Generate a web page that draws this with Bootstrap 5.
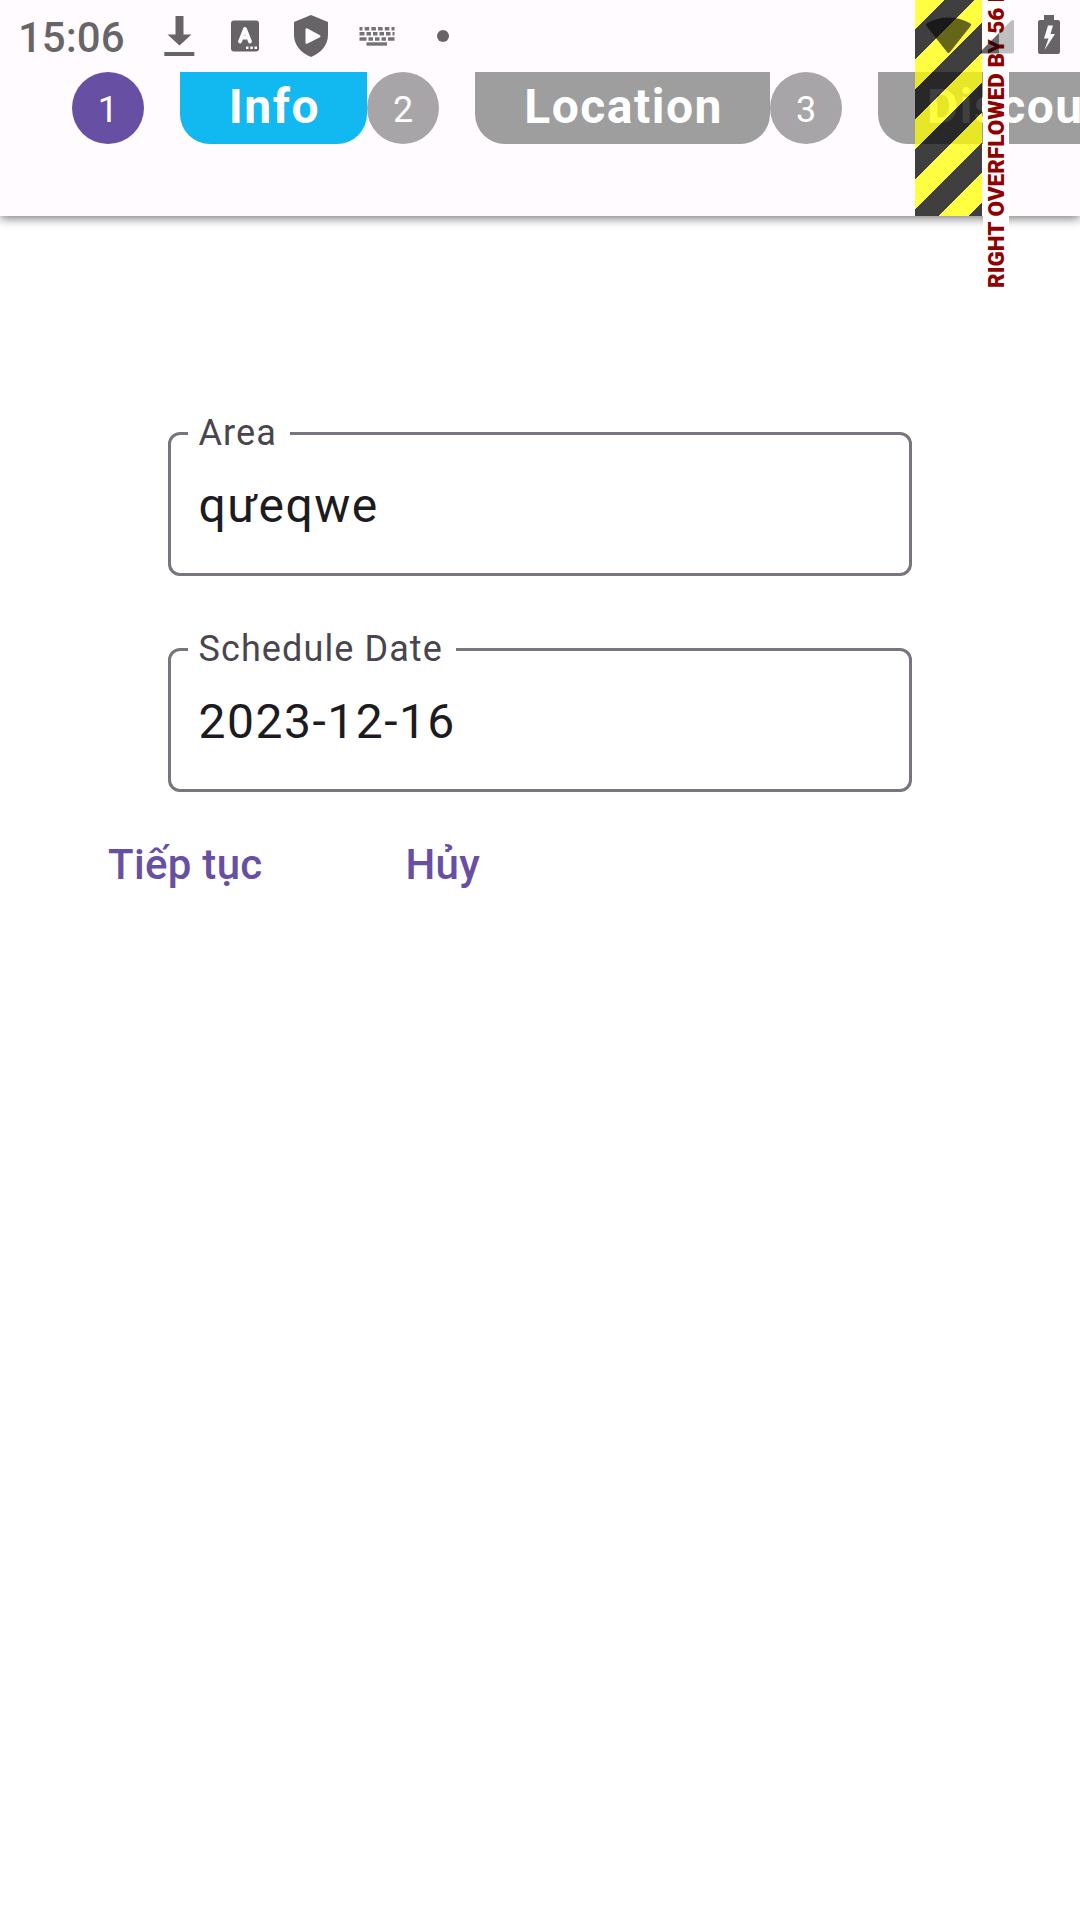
<!DOCTYPE html>
<html lang="vi">
<head>
<meta charset="utf-8">
<meta name="viewport" content="width=device-width, initial-scale=1">
<title>Schedule</title>
<link href="https://cdn.jsdelivr.net/npm/bootstrap@5.3.0/dist/css/bootstrap.min.css" rel="stylesheet">
<style>
  body { font-family: Roboto, "Noto Sans", sans-serif; background: #fff; color: #1c1b1f; }
  .screen { width: 1080px; height: 1920px; }
  .app-bar { height: 216px; background: #fffbff; box-shadow: 0 3px 9px rgba(0,0,0,.48); padding: 72px 0 0 72px; }
  .step-dot { width: 72px; height: 72px; background: #a8a5a9; color: #fff; font-size: 36px; line-height: 76px; letter-spacing: .4px; }
  .step-dot.current { background: #6750a4; }
  .step-tab { height: 72px; margin-left: 36px; padding: 0 47.4px 0 48.800px; background: #9e9e9e; color: #fff; border-radius: 0 0 30px 30px;
    font-size: 48px; font-weight: 700; line-height: 70px; letter-spacing: 1.5px; }
  .step-tab.current { background: #12b8f0; }
  .stripes { left: 915px; top: 0; width: 67px; height: 216px;
    background: repeating-linear-gradient(135deg, rgba(255,255,0,.75) 0 21.213px, rgba(0,0,0,.75) 21.213px 42.426px); }
  .overflow-note { left: 983px; bottom: -72px; width: 26px; height: 320px; background: #fff; color: #900000;
    font-size: 22.5px; font-weight: 900; line-height: 26px; writing-mode: vertical-rl; transform: rotate(180deg); }
  .status-bar { height: 72px; color: rgba(0,0,0,.6); }
  .clock { font-size: 42px; font-weight: 500; line-height: 72px; padding: 2px 0 0 18px; width: 160px; }
  .form-area { padding: 216px 168px 0; }
  .field + .field { margin-top: 72px; }
  .field .form-control { height: 144px; border: 3px solid #79747e; border-radius: 12px; padding: 3px 28px 0 27.500px; font-size: 48px; letter-spacing: 1.5px; color: #1c1b1f; background: #fff; }
  .field .form-label { left: 20px; top: -23px; padding: 0 13px 0 10.500px; background: #fff; color: #49454f; font-size: 36px; line-height: 48px; letter-spacing: 1.1px; }
  .actions { padding: 12px 72px 0; gap: 71px; }
  .actions .btn { height: 120px; padding: 0 36px; border: 0; color: #6750a4; font-size: 42px; font-weight: 500; letter-spacing: .3px; }
</style>
<script src="https://cdn.jsdelivr.net/npm/bootstrap@5.3.0/dist/js/bootstrap.bundle.min.js"></script>
</head>
<body>
<div class="screen position-relative overflow-hidden">
  <header class="app-bar position-relative">
    <nav class="d-flex flex-nowrap text-nowrap">
      <span class="step-dot current rounded-circle flex-shrink-0 text-center">1</span>
      <span class="step-tab current flex-shrink-0">Info</span>
      <span class="step-dot rounded-circle flex-shrink-0 text-center">2</span>
      <span class="step-tab flex-shrink-0">Location</span>
      <span class="step-dot rounded-circle flex-shrink-0 text-center">3</span>
      <span class="step-tab flex-shrink-0">Discount</span>
    </nav>
    <div class="stripes position-absolute"></div>
    <div class="overflow-note position-absolute text-nowrap">RIGHT OVERFLOWED BY 56 PIXELS</div>
  </header>

  <div class="status-bar position-absolute top-0 start-0 w-100 d-flex">
    <div class="clock">15:06</div>
    <svg width="920" height="72" viewBox="160 0 920 72" fill="currentColor">
      <path d="M175.5 16h8v18.500h8l-12 11-12-11h8zM164.300 52h30v4h-30z"/>
      <path d="M234 20.500h22q3 0 3 3v25q0 3-3 3h-22q-3 0-3-3v-25q0-3 3-3z"/>
      <path d="M240 41.500l5-12.500 5 12.500M242 37.500h6" fill="none" stroke="#fffbff" stroke-width="3.800" stroke-linecap="round" stroke-linejoin="round"/>
      <path d="M246 46.500h2.500v2.500H246zM250.300 46.500h2.500v2.500h-2.500zM254.500 46.500h2.500v2.500h-2.500z" fill="#fffbff"/>
      <path fill-rule="evenodd" d="M311 15l17 7v13c0 10-7 18-17 22-10-4-17-12-17-22V22zM307.500 28.500q-2-1-2 1v13q0 2 2 1l12-6q2-1.500 0-2.500z"/>
      <g fill="none" stroke="currentColor" stroke-width="3.400" opacity=".9">
        <path d="M359.500 28.700h35" stroke-dasharray="3 2.200 4.500 2.200 4.500 2.200 4.500 2.200 4.500 2.200 6 9"/>
        <path d="M359.500 33.800h35" stroke-dasharray="5 2 4.500 2 4.500 2 4.500 2 4.500 2 5 9"/>
        <path d="M359.500 39h35" stroke-dasharray="7 2 4.500 2 4.500 2 4.500 2 8 9"/>
        <path d="M366.500 44h20.500"/>
      </g>
      <circle cx="443" cy="36" r="6"/>
      <path d="M926 25.500q-1-1 1-2.300 10-5.700 21.500-5.700T970 23.200q2 1.300 1 2.300L950 52q-1.500 2-3 0z"/>
      <path d="M981 53.500q-1.500-1 0-2.500L999 33v20.500z"/>
      <path d="M999 33l12-12.300q3-2 3 1V51q0 2.500-2.500 2.500H999z" opacity=".42"/>
      <path fill-rule="evenodd" d="M1044 15h10v5h4q2 0 2 2v30q0 2-2 2h-18q-2 0-2-2V22q0-2 2-2h4zM1048 25.500l-4 13h4.500l-4 11.500 10.500-16h-4.500l2.500-8.500z"/>
    </svg>
  </div>

  <main>
    <form class="form-area">
      <div class="field position-relative">
        <input id="area" class="form-control shadow-none" type="text" value="qưeqwe" spellcheck="false">
        <label for="area" class="form-label position-absolute mb-0">Area</label>
      </div>
      <div class="field position-relative">
        <input id="date" class="form-control shadow-none" type="text" value="2023-12-16">
        <label for="date" class="form-label position-absolute mb-0">Schedule Date</label>
      </div>
    </form>
    <div class="actions d-flex">
      <button type="button" class="btn">Tiếp tục</button>
      <button type="button" class="btn">Hủy</button>
    </div>
  </main>
</div>
</body>
</html>
